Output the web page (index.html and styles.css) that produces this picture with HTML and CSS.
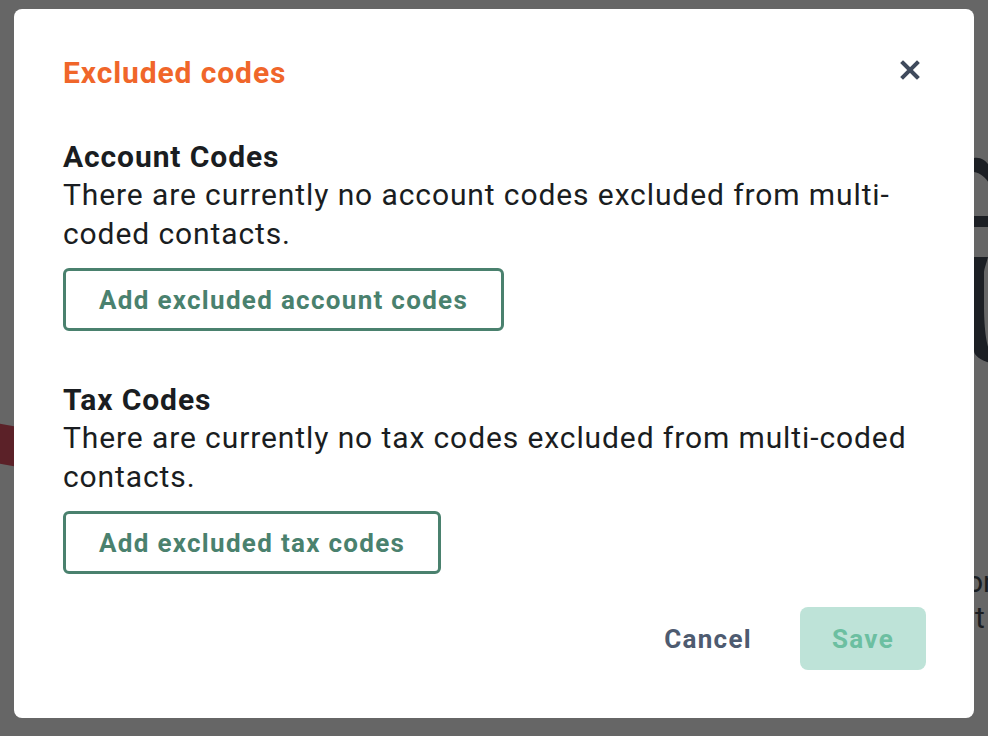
FILE: index.html
```html
<!DOCTYPE html>
<html>
<head>
<meta charset="utf-8">
<title>Excluded codes</title>
<link rel="stylesheet" href="styles.css">
</head>
<body>
<div class="backdrop">
	<svg class="bg-glyph" width="20" height="220" viewBox="0 0 20 220">
		<path d="M0 3 C6 2 12 5 16 12 L16 30 C12 22 6 18 0 17 Z" fill="#1c1f24"/>
		<rect x="0" y="61" width="16" height="11" fill="#1c1f24"/>
		<path d="M0 102 L14 102 C12 110 10 114 10 118 L10 150 C10 170 12 190 16 196 L16 208 C6 205 0 200 0 196 Z" fill="#1c1f24"/>
	</svg>
	<div class="bg-ribbon"></div>
	<div class="bg-text">on<br>t</div>
</div>

<div class="modal">
	<div class="modal-head">
		<h1>Excluded codes</h1>
		<button class="close" aria-label="Close">
			<svg width="20" height="20" viewBox="0 0 20 20"><path d="M3 3 L17 17 M17 3 L3 17" stroke="#3f4a5c" stroke-width="4" stroke-linecap="square"/></svg>
		</button>
	</div>

	<div class="section">
		<h2>Account Codes</h2>
		<p>There are currently no account codes excluded from multi-coded contacts.</p>
		<button class="btn-outline">Add excluded account codes</button>
	</div>

	<div class="section">
		<h2>Tax Codes</h2>
		<p>There are currently no tax codes excluded from multi-coded contacts.</p>
		<button class="btn-outline">Add excluded tax codes</button>
	</div>

	<div class="modal-foot">
		<button class="btn-text">Cancel</button>
		<button class="btn-save" disabled>Save</button>
	</div>
</div>
</body>
</html>
```

FILE: styles.css
```css
* {
	margin: 0;
	padding: 0;
	box-sizing: border-box;
}

body {
	background: #666666;
	font-family: Roboto, "Liberation Sans", sans-serif;
	padding: 9px 14px;
	height: 736px;
	overflow: hidden;
}

/* page behind the overlay */
.backdrop {
	position: absolute;
	left: 0;
	top: 0;
	width: 988px;
	height: 736px;
}

.bg-glyph {
	position: absolute;
	left: 974px;
	top: 155px;
}

.bg-ribbon {
	position: absolute;
	left: 0;
	top: 425px;
	width: 14px;
	height: 40px;
	background: #5b2128;
	transform: skewY(10deg);
}

.bg-text {
	position: absolute;
	left: 975px;
	top: 564px;
	font-size: 30px;
	line-height: 36px;
	text-indent: -9px;
	color: #1a1d21;
}

.modal {
	position: relative;
	width: 960px;
	height: 709px;
	background: #fff;
	border-radius: 8px;
	padding: 49px 48px 48px 49px;
	display: flex;
	flex-direction: column;
}

.modal-head {
	display: flex;
	justify-content: space-between;
	align-items: center;
	margin-bottom: 50px;
}

.modal-head h1 {
	font-size: 30px;
	font-weight: 700;
	letter-spacing: 0.9px;
	color: #f0662a;
	line-height: 30px;
}

.close {
	background: none;
	border: none;
	width: 20px;
	height: 20px;
	margin-right: 6px;
	margin-top: -6px;
}

.section + .section {
	margin-top: 50px;
}

.section h2 {
	font-size: 30px;
	font-weight: 700;
	letter-spacing: 0.9px;
	color: #1a1d21;
	line-height: 37px;
}

.section p {
	font-size: 30px;
	letter-spacing: 0.9px;
	color: #1a1d21;
	line-height: 39px;
	width: 870px;
	margin-bottom: 15px;
}

.btn-outline {
	font-family: Roboto, "Liberation Sans", sans-serif;
	font-size: 26px;
	font-weight: 700;
	letter-spacing: 1.3px;
	color: #4a816e;
	background: #fff;
	border: 3px solid #4a816e;
	border-radius: 6px;
	height: 63px;
	padding: 0 33px;
}

.modal-foot {
	margin-top: auto;
	display: flex;
	justify-content: flex-end;
	align-items: center;
	gap: 48px;
}

.btn-text {
	font-family: Roboto, "Liberation Sans", sans-serif;
	font-size: 26px;
	font-weight: 700;
	letter-spacing: 1.3px;
	color: #4e5b70;
	background: none;
	border: none;
}

.btn-save {
	font-family: Roboto, "Liberation Sans", sans-serif;
	font-size: 26px;
	font-weight: 700;
	letter-spacing: 1.3px;
	color: #6cbfa1;
	background: #bee3d8;
	border: none;
	border-radius: 8px;
	width: 126px;
	height: 63px;
}
```
